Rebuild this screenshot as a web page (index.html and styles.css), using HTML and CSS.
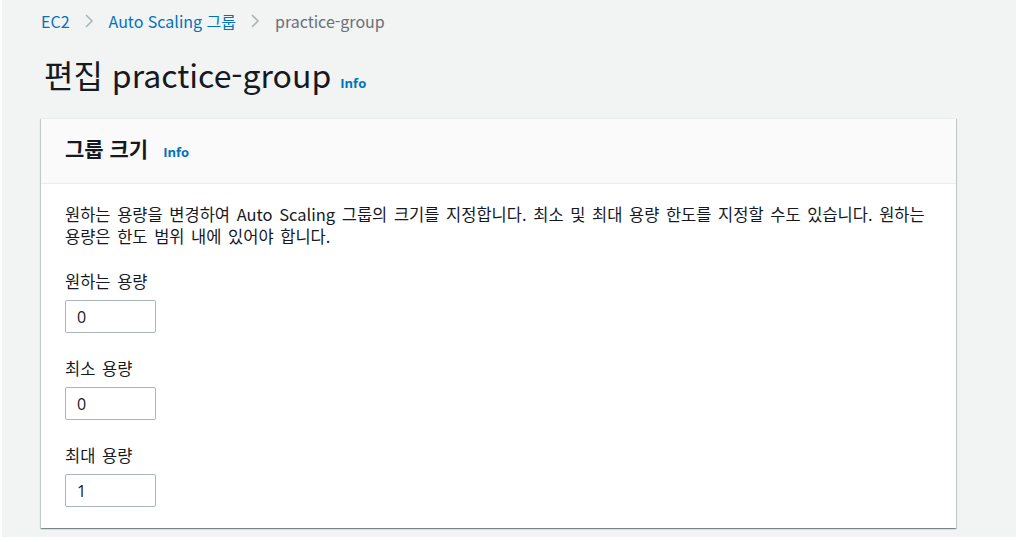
FILE: index.html
```html
<!DOCTYPE html>
<html lang="ko">
<head>
  <meta charset="UTF-8">
  <meta name="viewport" content="width=device-width, initial-scale=1.0">
  <title>편집 practice-group</title>
  <link rel="stylesheet" href="styles.css">
</head>
<body>
  <div class="page">
    <nav class="breadcrumb">
      <a href="#">EC2</a>
      <span class="sep">
        <svg width="10" height="14" viewBox="0 0 10 14"><path d="M2 1l6 6-6 6" fill="none" stroke="#aab7b8" stroke-width="1.6"/></svg>
      </span>
      <a href="#">Auto Scaling 그룹</a>
      <span class="sep">
        <svg width="10" height="14" viewBox="0 0 10 14"><path d="M2 1l6 6-6 6" fill="none" stroke="#aab7b8" stroke-width="1.6"/></svg>
      </span>
      <span class="current">practice-group</span>
    </nav>

    <h1 class="page-title">편집 practice-group <a class="info" href="#">Info</a></h1>

    <div class="card">
      <div class="card-header">
        <h2>그룹 크기 <a class="info" href="#">Info</a></h2>
      </div>
      <div class="card-body">
        <p class="desc">원하는 용량을 변경하여 Auto Scaling 그룹의 크기를 지정합니다. 최소 및 최대 용량 한도를 지정할 수도 있습니다. 원하는 용량은 한도 범위 내에 있어야 합니다.</p>

        <div class="field">
          <label for="desired">원하는 용량</label>
          <input id="desired" type="text" value="0">
        </div>
        <div class="field">
          <label for="min">최소 용량</label>
          <input id="min" type="text" value="0">
        </div>
        <div class="field">
          <label for="max">최대 용량</label>
          <input id="max" type="text" value="1">
        </div>
      </div>
    </div>
  </div>
</body>
</html>
```

FILE: styles.css
```css
html {
  background: #fff;
}
body {
  margin: 0;
  border-left: 2px solid #fff;
  background-color: #f2f3f3;
  font-family: "Noto Sans CJK KR", "Open Sans", sans-serif;
  font-size: 16.5px;
  color: #16191f;
  min-height: 537px;
}
.page {
  padding: 10px 0 0 39px;
  width: 915px;
}
.breadcrumb {
  display: flex;
  align-items: center;
  line-height: 22px;
  font-size: 16px;
}
.breadcrumb a {
  color: #0073bb;
  text-decoration: none;
}
.breadcrumb .sep {
  display: flex;
  align-items: center;
  margin: 0 15px 0 14px;
}
.breadcrumb .current {
  color: #687078;
}
.page-title {
  display: flex;
  align-items: baseline;
  margin: 23px 0 0 3px;
  font-size: 32px;
  font-weight: 400;
  line-height: 38px;
}
.info {
  margin-left: 9px;
  font-size: 13px;
  font-weight: 700;
  line-height: 1;
  color: #0073bb;
  text-decoration: none;
  font-family: "Open Sans", sans-serif;
}
.card {
  margin-top: 25px;
  background: #fff;
  border-top: 1px solid #eaeded;
  box-shadow: 0 1px 1px 0 rgba(0, 28, 36, 0.3), 1px 1px 1px 0 rgba(0, 28, 36, 0.15), -1px 1px 1px 0 rgba(0, 28, 36, 0.15);
}
.card-header {
  padding: 17px 24px 22px;
  background: #fafafa;
  border-bottom: 1px solid #eaeded;
}
.card-header h2 {
  display: flex;
  align-items: baseline;
  margin: 0;
  font-size: 21px;
  font-weight: 700;
  line-height: 25px;
}
.card-header .info {
  margin-left: 15px;
}
.card-body {
  padding: 19px 24px 21px;
}
.desc {
  margin: 0;
  line-height: 22px;
  word-spacing: 2px;
}
.field {
  display: flex;
  flex-direction: column;
  align-items: flex-start;
  margin-top: 24px;
}
.field:first-of-type {
  margin-top: 23px;
}
.field label {
  line-height: 22px;
  margin-bottom: 8px;
  word-spacing: 2px;
}
.field input {
  box-sizing: border-box;
  width: 91px;
  height: 33px;
  padding: 0 11px;
  border: 1px solid #aab7b8;
  border-radius: 2px;
  font-family: "Open Sans", sans-serif;
  font-size: 16px;
  color: #16191f;
  background: #fff;
}
```
